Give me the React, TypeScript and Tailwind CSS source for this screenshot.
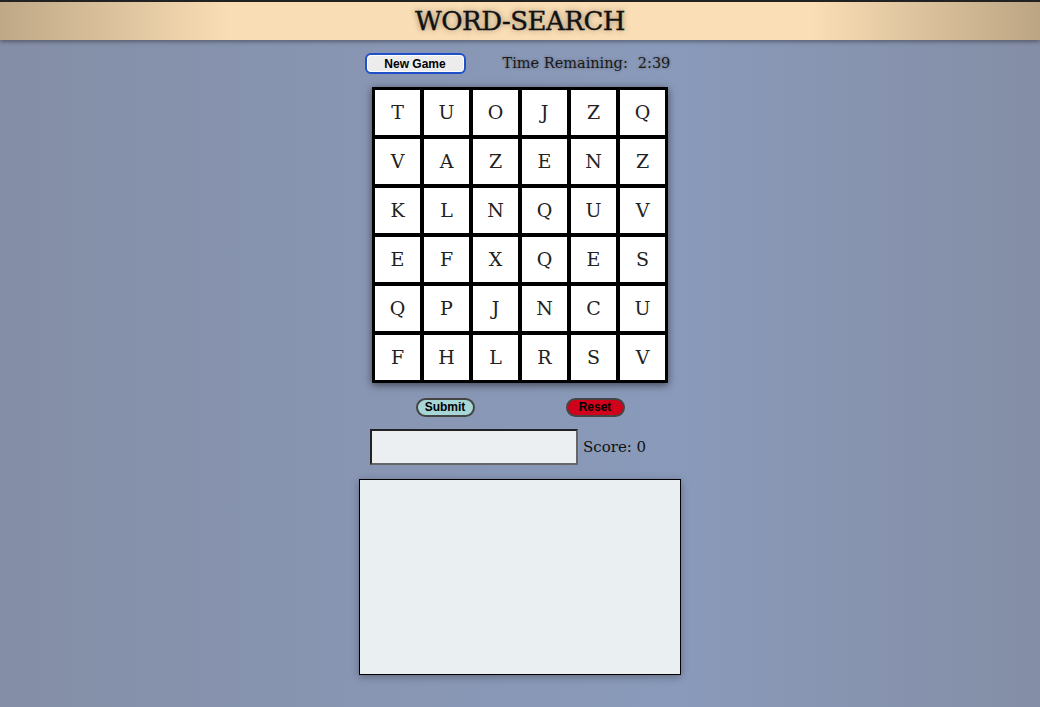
import React, { useState } from "react";

const initialBoard = [
  ["T", "U", "O", "J", "Z", "Q"],
  ["V", "A", "Z", "E", "N", "Z"],
  ["K", "L", "N", "Q", "U", "V"],
  ["E", "F", "X", "Q", "E", "S"],
  ["Q", "P", "J", "N", "C", "U"],
  ["F", "H", "L", "R", "S", "V"],
];

const serif = "font-['DejaVu_Serif','Liberation_Serif',serif]";

export default function App() {
  const [board] = useState(initialBoard);
  const [guess, setGuess] = useState("");
  const [score] = useState(0);

  return (
    <div className="min-h-screen w-full bg-[linear-gradient(to_right,#848ea6_0%,#8896b3_35%,#8a9aba_65%,#848ea6_100%)]">
      {/* Header */}
      <header className="h-10 border-t-2 border-[#222] bg-[linear-gradient(to_right,#bfa886_0%,#f9ddb4_22%,#fadeb5_78%,#bca583_100%)] shadow-[0_2px_4px_rgba(0,0,0,0.35)] flex items-center justify-center">
        <h1
          className={`${serif} text-[26px] leading-none tracking-[-0.5px] text-[#111] [-webkit-text-stroke:0.4px_#111] [text-shadow:0_0_6px_rgba(0,0,0,0.45)]`}
        >
          WORD-SEARCH
        </h1>
      </header>

      <main className="flex flex-col items-center">
        {/* Controls row */}
        <div className="mt-[13px] flex items-center w-[310px] ml-[-1px]">
          <button className="shrink-0 w-[101px] h-[21px] rounded-[6px] border-2 border-[#1f50c8] bg-[#ececec] shadow-[inset_0_0_0_1px_#fff] font-['Liberation_Sans',Arial,sans-serif] text-[12px] font-bold text-black leading-none">
            New Game
          </button>
          <div
            className={`${serif} ml-[37px] whitespace-nowrap text-[14.5px] text-[#1a1a1a] [text-shadow:0_0_3px_rgba(0,0,0,0.35)] flex gap-[10px]`}
          >
            <span>Time Remaining:</span>
            <span>2:39</span>
          </div>
        </div>

        {/* Board */}
        <div className="mt-[12px] border border-black shadow-[0_2px_8px_rgba(0,0,0,0.55)] grid grid-cols-6">
          {board.flat().map((ch, i) => (
            <div
              key={i}
              className={`${serif} w-[49px] h-[49px] border-2 border-black bg-white flex items-center justify-center text-[19px] text-[#222]`}
            >
              {ch}
            </div>
          ))}
        </div>

        {/* Submit / Reset */}
        <div className="mt-[15px] w-[300px] flex justify-around">
          <button className="w-[59px] h-[19px] rounded-full border-2 border-[#444] bg-[#a6d6d6] font-['Liberation_Sans',Arial,sans-serif] text-[12px] font-bold text-black leading-none">
            Submit
          </button>
          <button className="w-[59px] h-[19px] rounded-full border-2 border-[#444] bg-[#d0021b] font-['Liberation_Sans',Arial,sans-serif] text-[12px] font-bold text-black leading-none">
            Reset
          </button>
        </div>

        {/* Guess input + score */}
        <div className="mt-[12px] w-[300px] flex items-center">
          <input
            value={guess}
            onChange={(e) => setGuess(e.target.value)}
            className="w-[208px] h-[36px] bg-[#ebeff2] border-2 border-t-[#222] border-l-[#222] border-b-[#666] border-r-[#666] outline-none px-1"
          />
          <span className={`${serif} ml-[5px] text-[15px] text-[#111]`}>
            Score: {score}
          </span>
        </div>

        {/* Found words */}
        <div className="mt-[14px] w-[322px] h-[196px] bg-[#eaeff2] border border-black shadow-[0_2px_8px_rgba(0,0,0,0.3)]"></div>
      </main>
    </div>
  );
}
